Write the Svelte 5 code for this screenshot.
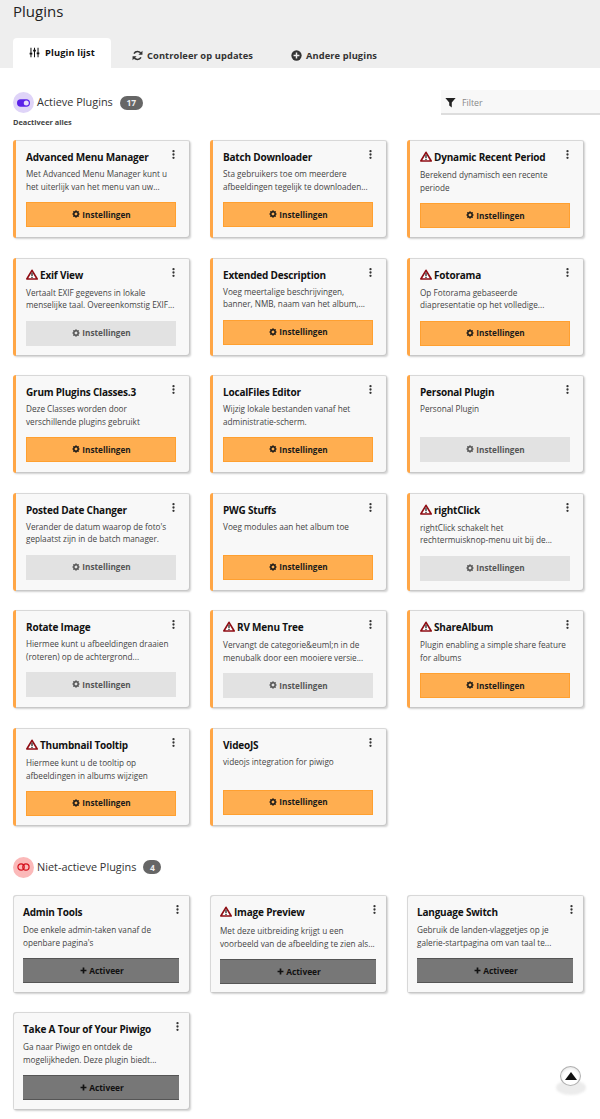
<script>
  const active = [
    { t: 'Advanced Menu Manager', d: 'Met Advanced Menu Manager kunt u het uiterlijk van het menu van uw...', on: true },
    { t: 'Batch Downloader', d: 'Sta gebruikers toe om meerdere afbeeldingen tegelijk te downloaden...', on: true },
    { t: 'Dynamic Recent Period', d: 'Berekend dynamisch een recente periode', on: true, w: true },
    { t: 'Exif View', d: 'Vertaalt EXIF gegevens in lokale menselijke taal. Overeenkomstig EXIF...', on: false, w: true },
    { t: 'Extended Description', d: 'Voeg meertalige beschrijvingen, banner, NMB, naam van het album,...', on: true },
    { t: 'Fotorama', d: 'Op Fotorama gebaseerde diapresentatie op het volledige...', on: true, w: true },
    { t: 'Grum Plugins Classes.3', d: 'Deze Classes worden door verschillende plugins gebruikt', on: true },
    { t: 'LocalFiles Editor', d: 'Wijzig lokale bestanden vanaf het administratie-scherm.', on: true },
    { t: 'Personal Plugin', d: 'Personal Plugin', on: false },
    { t: 'Posted Date Changer', d: "Verander de datum waarop de foto's geplaatst zijn in de batch manager.", on: false },
    { t: 'PWG Stuffs', d: 'Voeg modules aan het album toe', on: true },
    { t: 'rightClick', d: 'rightClick schakelt het rechtermuisknop-menu uit bij de...', on: false, w: true },
    { t: 'Rotate Image', d: 'Hiermee kunt u afbeeldingen draaien (roteren) op de achtergrond...', on: false },
    { t: 'RV Menu Tree', d: 'Vervangt de categorie&euml;n in de menubalk door een mooiere versie...', on: false, w: true },
    { t: 'ShareAlbum', d: 'Plugin enabling a simple share feature for albums', on: true, w: true },
    { t: 'Thumbnail Tooltip', d: 'Hiermee kunt u de tooltip op afbeeldingen in albums wijzigen', on: true, w: true },
    { t: 'VideoJS', d: 'videojs integration for piwigo', on: true, w: false },
  ];
  const inactive = [
    { t: 'Admin Tools', d: "Doe enkele admin-taken vanaf de openbare pagina's" },
    { t: 'Image Preview', d: 'Met deze uitbreiding krijgt u een voorbeeld van de afbeelding te zien als...', w: true },
    { t: 'Language Switch', d: 'Gebruik de landen-vlaggetjes op je galerie-startpagina om van taal te...' },
    { t: 'Take A Tour of Your Piwigo', d: 'Ga naar Piwigo en ontdek de mogelijkheden. Deze plugin biedt...' },
  ];
</script>

{#snippet gear()}
  <svg class="gear" viewBox="0 0 16 16" aria-hidden="true">
    <circle cx="8" cy="8" r="4.4" fill="none" stroke="currentColor" stroke-width="3"/>
    <path d="M8 0.6v3M8 12.4v3M0.6 8h3M12.4 8h3M2.8 2.8l2.1 2.1M11.1 11.1l2.1 2.1M13.2 2.8l-2.1 2.1M4.9 11.1l-2.1 2.1" stroke="currentColor" stroke-width="2.4"/>
  </svg>
{/snippet}

{#snippet card(p, isActive)}
  <article class="card" class:active={isActive}>
    <svg class="more" viewBox="0 0 3 9" aria-hidden="true">
      <circle cx="1.5" cy="1.2" r="1.15"/><circle cx="1.5" cy="4.5" r="1.15"/><circle cx="1.5" cy="7.8" r="1.15"/>
    </svg>
    <h3 class:warned={p.w}>
      {#if p.w}
        <svg class="warn" viewBox="0 0 16 14" aria-hidden="true">
          <path d="M8 1.4 14.9 13H1.1Z" fill="#fff" stroke="#8f0d14" stroke-width="2.2" stroke-linejoin="round"/>
          <path d="M8 4.8v4.2M8 9.9v1.6" stroke="#222" stroke-width="1.7"/>
        </svg>
      {/if}
      <span>{p.t}</span>
    </h3>
    <p>{p.d}</p>
    {#if isActive}
      <div class="btn" class:on={p.on}>{@render gear()}<span>Instellingen</span></div>
    {:else}
      <div class="btn activate">
        <svg class="plus" viewBox="0 0 10 10" aria-hidden="true"><path d="M5 .8v8.4M.8 5h8.4" stroke="currentColor" stroke-width="2.4"/></svg>
        <span>Activeer</span>
      </div>
    {/if}
  </article>
{/snippet}

<div class="page">
  <header class="top">
    <h1>Plugins</h1>
    <nav class="tabs">
      <div class="tab current">
        <svg viewBox="0 0 14 12" aria-hidden="true">
          <path d="M2.5 0v12M7 0v12M11.5 0v12" stroke="currentColor" stroke-width="1.3"/>
          <path d="M.8 7.5h3.4M5.3 3.5h3.4M9.8 7h3.4" stroke="currentColor" stroke-width="2.2"/>
        </svg>
        <span>Plugin lijst</span>
      </div>
      <div class="tab second-tab">
        <svg viewBox="0 0 12 12" aria-hidden="true">
          <path d="M10 4.2A4.4 4.4 0 0 0 2.2 4M2 7.8A4.4 4.4 0 0 0 9.8 8" fill="none" stroke="currentColor" stroke-width="1.7"/>
          <path d="M11.4 0.8v4.4H7ZM.6 11.2V6.8H5Z" fill="currentColor"/>
        </svg>
        <span>Controleer op updates</span>
      </div>
      <div class="tab">
        <svg viewBox="0 0 12 12" aria-hidden="true">
          <circle cx="6" cy="6" r="5.6" fill="currentColor"/>
          <path d="M6 2.8v6.4M2.8 6h6.4" stroke="#eee" stroke-width="1.6"/>
        </svg>
        <span>Andere plugins</span>
      </div>
    </nav>
  </header>

  <main>
    <section class="head first">
      <div class="title-row">
        <span class="badge violet">
          <svg viewBox="0 0 14 8" aria-hidden="true">
            <rect width="14" height="8" rx="4" fill="#5a20e8"/><circle cx="10" cy="4" r="2.7" fill="#e6dcfa"/>
          </svg>
        </span>
        <h2>Actieve Plugins</h2>
        <span class="count">17</span>
      </div>
      <div class="filter">
        <svg viewBox="0 0 12 12" aria-hidden="true"><path d="M.4 1h11.2L7.4 6v5.4L4.6 9.4V6Z" fill="#222"/></svg>
        <span>Filter</span>
      </div>
    </section>
    <div class="deact">Deactiveer alles</div>
    <div class="grid">
      {#each active as p}{@render card(p, true)}{/each}
    </div>

    <section class="head second">
      <div class="title-row">
        <span class="badge red">
          <svg viewBox="0 0 14 8" aria-hidden="true">
            <circle cx="4.4" cy="4" r="3.4" fill="none" stroke="#d40f1c" stroke-width="1.3"/>
            <circle cx="9.6" cy="4" r="3.4" fill="none" stroke="#d40f1c" stroke-width="1.3"/>
          </svg>
        </span>
        <h2>Niet-actieve Plugins</h2>
        <span class="count small">4</span>
      </div>
    </section>
    <div class="grid inactive">
      {#each inactive as p}{@render card(p, false)}{/each}
    </div>
  </main>

  <div class="totop" aria-hidden="true">
    <div class="shadow"></div>
    <div class="ball"><i></i></div>
  </div>
</div>

<style>
  :global(body) { margin: 0; background: #fff; }
  .page {
    position: relative;
    height: 1119px;
    overflow: hidden;
    font-family: "Open Sans", "Liberation Sans", sans-serif;
    color: #333;
    background: #fff;
  }
  .top { background: #eee; height: 68px; padding-left: 13px; box-sizing: border-box; display: flex; flex-direction: column; }
  h1 { margin: 0; font-weight: 400; font-size: 15px; line-height: 22px; color: #222; }
  .tabs { display: flex; margin-top: 16px; height: 30px; }
  .tab {
    display: flex; align-items: center; gap: 4px;
    font-size: 9.3px; font-weight: 700; color: #333; letter-spacing: .1px;
    padding-top: 4px; box-sizing: border-box;
  }
  .second-tab { width: 180px; padding-left: 21px; }
  .tab svg { width: 11px; height: 11px; flex: none; }
  .tab.current { background: #fff; width: 98px; justify-content: center; gap: 5px; border-radius: 4px 4px 0 0; color: #111; padding-top: 0; padding-bottom: 2px; }

  .head { display: flex; align-items: center; justify-content: space-between; padding-left: 13px; }
  .first { margin-top: 22px; height: 25px; }
  .second { margin-top: 31px; height: 21px; }
  .title-row { display: flex; align-items: center; }
  .badge { width: 21px; height: 21px; border-radius: 50%; display: flex; align-items: center; justify-content: center; }
  .badge svg { width: 13px; height: 8px; }
  .violet { background: #dfd4f8; }
  .red { background: #fbb9b9; }
  h2 { margin: 0 0 0 3px; font-size: 10.9px; font-weight: 400; line-height: 20px; color: #333; padding-bottom: 1px; }
  .count {
    margin-left: 7px; background: #666; color: #eee; font-size: 8.5px; font-weight: 700;
    border-radius: 7px; height: 14px; width: 23px; display: flex; align-items: center; justify-content: center;
  }
  .count.small { width: 18px; }
  .filter {
    width: 159px; height: 25px; box-sizing: border-box; background: #f8f8f8; border-bottom: 2px solid #ddd;
    display: flex; align-items: center; gap: 6px; padding-left: 4px; padding-top: 2px;
    font-size: 8.8px; color: #888;
  }
  .filter svg { width: 11px; height: 11px; }
  .deact { padding-left: 13px; margin-top: 1px; font-size: 7.4px; font-weight: 700; color: #444; line-height: 12px; }

  .grid {
    display: grid; grid-template-columns: repeat(3, 177px); column-gap: 20px; row-gap: 19.6px;
    padding-left: 13px; margin-top: 12px;
  }
  .grid.inactive { margin-top: 17px; row-gap: 19px; }
  .card {
    position: relative; box-sizing: border-box; height: 98px;
    background: #f8f8f8; border-radius: 3px;
    box-shadow: inset 1px 1px 0 #d8d8d8, inset -1px -1px 0 #c8c8c8, 1px 1px 2px #d0d0d0;
    padding: 10px 11px 0 10px;
    display: flex; flex-direction: column;
  }
  .card.active {
    border-left: 3px solid #ffa646; padding-right: 14px;
    box-shadow: inset 0 1px 0 #d8d8d8, inset -1px -1px 0 #c8c8c8, 1px 1px 2px #d0d0d0;
  }
  .more { position: absolute; top: 10px; right: 11px; width: 3px; height: 9px; fill: #333; }
  .card.active .more { right: 15px; }
  h3 {
    margin: 0; font-size: 10px; letter-spacing: -.2px; line-height: 15px; height: 15px; font-weight: 700; color: #111;
    display: flex; align-items: flex-start; gap: 2px; white-space: nowrap;
  }
  h3.warned { height: 16px; }
  .warn { width: 12px; height: 11px; flex: none; margin-top: 1px; }
  p {
    margin: 4px 0 0; font-size: 8.2px; line-height: 12.6px; color: #444; height: 25px;
  }
  .card.active p { margin-top: 3px; }
  .btn {
    margin-top: 9px; height: 25px; flex: none;
    display: flex; align-items: center; justify-content: center; gap: 2px;
    font-size: 8.2px; font-weight: 700; background: #e2e2e2; color: #555; box-sizing: border-box;
    padding: 0 0 1px 1px;
  }
  .btn.on { background: #ffae50; color: #1a1a1a; border: 1px solid #ffa030; }
  .btn.activate { background: #777; color: #111; border-top: 1px solid #555; border-bottom: 1px solid #555; font-size: 8.4px; padding: 0 0 0 2px; }
  .gear { width: 8px; height: 8px; }
  .plus { width: 7px; height: 7px; }

  .totop { position: absolute; left: 556px; top: 1066px; width: 30px; height: 30px; }
  .shadow { position: absolute; left: 0; top: 14px; width: 30px; height: 15px; border-radius: 50%; background: #ececec; filter: blur(1px); }
  .ball {
    position: absolute; left: 4px; top: 0; width: 21px; height: 20px; border-radius: 50%;
    background: radial-gradient(circle at 50% 60%, #fff 50%, #ddd 90%); border: 1px solid #b0b0b0; box-sizing: border-box;
    display: flex; align-items: center; justify-content: center;
  }
  .ball i { width: 0; height: 0; border-left: 6px solid transparent; border-right: 6px solid transparent; border-bottom: 8px solid #111; }
</style>
